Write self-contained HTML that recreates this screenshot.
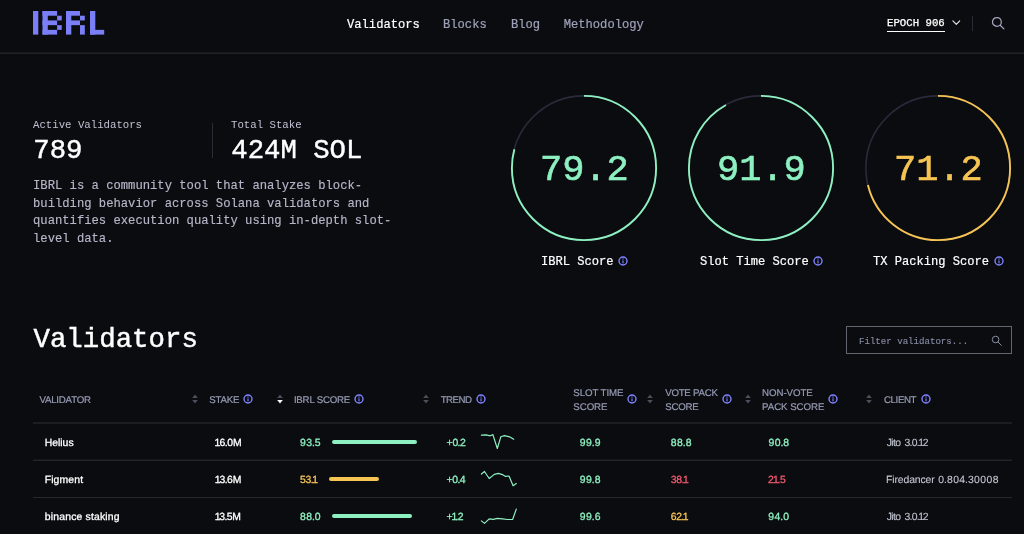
<!DOCTYPE html>
<html lang="en">
<head>
<meta charset="utf-8">
<title>IBRL</title>
<style>
*{box-sizing:border-box;margin:0;padding:0}
html,body{width:1024px;height:534px;overflow:hidden;background:#0b0c10;}
body{position:relative;will-change:transform;font-family:"Liberation Sans",sans-serif;color:#fff;}
.mono{font-family:"Liberation Mono",monospace;}
.abs{position:absolute;white-space:nowrap;}
.t{position:absolute;white-space:nowrap;line-height:1;}
.nav{font-family:"Liberation Mono",monospace;font-size:12.15px;color:#9da1b8;top:18.5px;-webkit-text-stroke:0.2px currentColor;}
.big{font-family:"Liberation Mono",monospace;color:#fff;-webkit-text-stroke:0.45px #fff;}
.lbl{font-family:"Liberation Mono",monospace;font-size:10.7px;color:#bfc2d2;}
.score{font-family:"Liberation Mono",monospace;font-size:37px;-webkit-text-stroke:0.6px currentColor;}
.slbl{font-family:"Liberation Mono",monospace;font-size:12.1px;color:#fff;-webkit-text-stroke:0.2px #fff;}
.green{color:#8df0c0;}
.yellow{color:#f6c453;}
.red{color:#ef5a6f;}
.th{position:absolute;font-size:9.7px;text-rendering:geometricPrecision;color:#979bb3;-webkit-text-stroke:0.2px currentColor;line-height:14.6px;white-space:nowrap;}
.td{position:absolute;font-size:10.4px;text-rendering:geometricPrecision;line-height:1;white-space:nowrap;-webkit-text-stroke:0.3px currentColor;}
.cl{-webkit-text-stroke:0.1px currentColor;}
i{font-style:normal;}
.p{margin:0 -0.45px;}
.o{margin:0 -0.9px 0 -0.8px;}
.rowline{position:absolute;left:33px;width:978.5px;height:1px;background:#24252e;}
.bar{position:absolute;height:3.5px;border-radius:2px;}
svg{position:absolute;overflow:visible;}
</style>
</head>
<body>
<svg style="left:33px;top:11.2px" width="72" height="23.6" viewBox="0 0 72 24" preserveAspectRatio="none">
<g fill="#7b7ff7">
<rect x="0" y="0" width="5.3" height="24"/>
<rect x="9.5" y="0" width="5.3" height="24"/>
<rect x="9.5" y="0" width="14.6" height="4.8"/>
<rect x="9.5" y="9.6" width="14.6" height="4.8"/>
<rect x="9.5" y="19.2" width="14.6" height="4.8"/>
<rect x="24.1" y="4.8" width="4.6" height="4.8"/>
<rect x="24.1" y="14.4" width="4.6" height="4.8"/>
<rect x="33" y="0" width="5.3" height="24"/>
<rect x="33" y="0" width="14" height="4.8"/>
<rect x="33" y="9.6" width="14" height="4.8"/>
<rect x="47" y="4.8" width="4.8" height="4.8"/>
<rect x="47" y="14.4" width="4.8" height="9.6"/>
<rect x="57" y="0" width="5.3" height="24"/>
<rect x="57" y="19.2" width="14.2" height="4.8"/>
</g></svg>
<div class="t nav" style="left:347px;color:#fff;">Validators</div>
<div class="t nav" style="left:443px;">Blocks</div>
<div class="t nav" style="left:511px;">Blog</div>
<div class="t nav" style="left:563.7px;">Methodology</div>
<div class="t mono" style="left:887px;top:17.8px;font-size:10.7px;color:#fff;-webkit-text-stroke:0.25px #fff;">EPOCH 906</div>
<div class="abs" style="left:887px;top:31px;width:58px;height:1px;background:#fff;"></div>
<svg style="left:951.5px;top:20.3px" width="9" height="6" viewBox="0 0 9 6"><path d="M0.9 0.9 L4.3 4.4 L7.7 0.9" fill="none" stroke="#e4e5ec" stroke-width="1.15" stroke-linecap="round" stroke-linejoin="round"/></svg>
<div class="abs" style="left:972px;top:16px;width:1px;height:15px;background:#2a2b36;"></div>
<svg style="left:990.5px;top:16.3px" width="14" height="14" viewBox="0 0 14 14"><circle cx="5.9" cy="5.9" r="4.4" fill="none" stroke="#a3a7bf" stroke-width="1.25"/><path d="M9.2 9.2 L12.9 12.9" stroke="#a3a7bf" stroke-width="1.25" stroke-linecap="round"/></svg>
<div class="abs" style="left:0;top:52px;width:1024px;height:1px;background:#17181d;"></div><div class="abs" style="left:0;top:53px;width:1024px;height:1px;background:#222329;"></div>
<div class="t lbl" style="left:33px;top:119.8px;">Active Validators</div>
<div class="t big" style="left:33.3px;top:137.2px;font-size:27.3px;">789</div>
<div class="abs" style="left:212px;top:123px;width:1px;height:35px;background:#2a2b36;"></div>
<div class="t lbl" style="left:231px;top:119.8px;">Total Stake</div>
<div class="t big" style="left:231.3px;top:137.2px;font-size:27.3px;">424M SOL</div>
<div class="abs mono" style="left:33px;top:177.8px;font-size:12.2px;line-height:17.7px;color:#b5b8c9;white-space:pre;-webkit-text-stroke:0.15px currentColor;">IBRL is a community tool that analyzes block-
building behavior across Solana validators and
quantifies execution quality using in-depth slot-
level data.</div>
<svg style="left:510px;top:93.7px" width="148" height="148" viewBox="0 0 148 148">
<circle cx="74" cy="74" r="72.1" fill="none" stroke="#292b3a" stroke-width="1.6"/>
<circle cx="74" cy="74" r="72.1" fill="none" stroke="#8df0c0" stroke-width="1.9" pathLength="100" stroke-dasharray="79.2 100" transform="rotate(-90 74 74)"/>
</svg>
<svg style="left:687px;top:93.7px" width="148" height="148" viewBox="0 0 148 148">
<circle cx="74" cy="74" r="72.1" fill="none" stroke="#292b3a" stroke-width="1.6"/>
<circle cx="74" cy="74" r="72.1" fill="none" stroke="#8df0c0" stroke-width="1.9" pathLength="100" stroke-dasharray="91.9 100" transform="rotate(-90 74 74)"/>
</svg>
<svg style="left:864px;top:93.7px" width="148" height="148" viewBox="0 0 148 148">
<circle cx="74" cy="74" r="72.1" fill="none" stroke="#292b3a" stroke-width="1.6"/>
<circle cx="74" cy="74" r="72.1" fill="none" stroke="#f6c453" stroke-width="1.9" pathLength="100" stroke-dasharray="71.2 100" transform="rotate(-90 74 74)"/>
</svg>
<div class="t score green" style="left:540px;top:152px;">79.2</div>
<div class="t score green" style="left:717px;top:152px;">91.9</div>
<div class="t score yellow" style="left:894px;top:152px;">71.2</div>
<div class="t slbl" style="left:541px;top:255.8px;">IBRL Score</div>
<div class="t slbl" style="left:700px;top:255.8px;">Slot Time Score</div>
<div class="t slbl" style="left:873px;top:255.8px;">TX Packing Score</div>
<svg style="left:616.7px;top:254.5px" width="12" height="12" viewBox="-6 -6 12 12"><circle r="4.0" fill="none" stroke="#7f83ff" stroke-width="1.4"/><circle cx="0" cy="-1.9" r="0.75" fill="#6d71e6"/><rect x="-0.65" y="-0.8" width="1.3" height="3.3" rx="0.5" fill="#6d71e6"/></svg><svg style="left:812px;top:254.5px" width="12" height="12" viewBox="-6 -6 12 12"><circle r="4.0" fill="none" stroke="#7f83ff" stroke-width="1.4"/><circle cx="0" cy="-1.9" r="0.75" fill="#6d71e6"/><rect x="-0.65" y="-0.8" width="1.3" height="3.3" rx="0.5" fill="#6d71e6"/></svg><svg style="left:992.5px;top:254.5px" width="12" height="12" viewBox="-6 -6 12 12"><circle r="4.0" fill="none" stroke="#7f83ff" stroke-width="1.4"/><circle cx="0" cy="-1.9" r="0.75" fill="#6d71e6"/><rect x="-0.65" y="-0.8" width="1.3" height="3.3" rx="0.5" fill="#6d71e6"/></svg>
<div class="t big" style="left:33.5px;top:326px;font-size:27.4px;">Validators</div>
<div class="abs" style="left:846px;top:326px;width:166px;height:28px;border:1px solid #62646f;"></div>
<div class="t mono" style="left:859px;top:337.1px;font-size:9.1px;color:#858aa2;-webkit-text-stroke:0.15px currentColor;">Filter validators...</div>
<svg style="left:990px;top:333.5px" width="13" height="13" viewBox="0 0 13 13"><circle cx="5.6" cy="5.5" r="3.3" fill="none" stroke="#8a8ea5" stroke-width="1"/><path d="M8.1 8.1 L11.3 11.3" stroke="#8a8ea5" stroke-width="1" stroke-linecap="round"/></svg>
<div class="th" style="left:39.39px;top:394.1px;letter-spacing:-0.209px;">VALIDATOR</div>
<div class="th" style="left:209.18px;top:394.1px;letter-spacing:-0.218px;">STAKE</div>
<div class="th" style="left:293.88px;top:394.1px;letter-spacing:-0.207px;">IBRL SCORE</div>
<div class="th" style="left:440.63px;top:394.1px;letter-spacing:-0.519px;">TREND</div>
<div class="th" style="left:573.33px;top:386.6px;letter-spacing:-0.073px;">SLOT TIME</div><div class="th" style="left:573.33px;top:401px;letter-spacing:-0.073px;">SCORE</div>
<div class="th" style="left:665.17px;top:386.6px;letter-spacing:-0.235px;">VOTE PACK</div><div class="th" style="left:665.17px;top:401px;letter-spacing:-0.235px;">SCORE</div>
<div class="th" style="left:762.06px;top:386.6px;letter-spacing:-0.049px;">NON-VOTE</div><div class="th" style="left:762.06px;top:401px;letter-spacing:-0.049px;">PACK SCORE</div>
<div class="th" style="left:883.99px;top:394.1px;letter-spacing:-0.379px;">CLIENT</div>
<svg style="left:242.4px;top:393px" width="12" height="12" viewBox="-6 -6 12 12"><circle r="4.0" fill="none" stroke="#7f83ff" stroke-width="1.4"/><circle cx="0" cy="-1.9" r="0.75" fill="#6d71e6"/><rect x="-0.65" y="-0.8" width="1.3" height="3.3" rx="0.5" fill="#6d71e6"/></svg><svg style="left:353.1px;top:393px" width="12" height="12" viewBox="-6 -6 12 12"><circle r="4.0" fill="none" stroke="#7f83ff" stroke-width="1.4"/><circle cx="0" cy="-1.9" r="0.75" fill="#6d71e6"/><rect x="-0.65" y="-0.8" width="1.3" height="3.3" rx="0.5" fill="#6d71e6"/></svg><svg style="left:475px;top:393px" width="12" height="12" viewBox="-6 -6 12 12"><circle r="4.0" fill="none" stroke="#7f83ff" stroke-width="1.4"/><circle cx="0" cy="-1.9" r="0.75" fill="#6d71e6"/><rect x="-0.65" y="-0.8" width="1.3" height="3.3" rx="0.5" fill="#6d71e6"/></svg><svg style="left:626.3px;top:393px" width="12" height="12" viewBox="-6 -6 12 12"><circle r="4.0" fill="none" stroke="#7f83ff" stroke-width="1.4"/><circle cx="0" cy="-1.9" r="0.75" fill="#6d71e6"/><rect x="-0.65" y="-0.8" width="1.3" height="3.3" rx="0.5" fill="#6d71e6"/></svg><svg style="left:721px;top:393px" width="12" height="12" viewBox="-6 -6 12 12"><circle r="4.0" fill="none" stroke="#7f83ff" stroke-width="1.4"/><circle cx="0" cy="-1.9" r="0.75" fill="#6d71e6"/><rect x="-0.65" y="-0.8" width="1.3" height="3.3" rx="0.5" fill="#6d71e6"/></svg><svg style="left:826.6px;top:393px" width="12" height="12" viewBox="-6 -6 12 12"><circle r="4.0" fill="none" stroke="#7f83ff" stroke-width="1.4"/><circle cx="0" cy="-1.9" r="0.75" fill="#6d71e6"/><rect x="-0.65" y="-0.8" width="1.3" height="3.3" rx="0.5" fill="#6d71e6"/></svg><svg style="left:920px;top:393px" width="12" height="12" viewBox="-6 -6 12 12"><circle r="4.0" fill="none" stroke="#7f83ff" stroke-width="1.4"/><circle cx="0" cy="-1.9" r="0.75" fill="#6d71e6"/><rect x="-0.65" y="-0.8" width="1.3" height="3.3" rx="0.5" fill="#6d71e6"/></svg><svg style="left:190.8px;top:393px" width="8" height="12" viewBox="-4 -6 8 12"><path d="M0 -4.5 L2.8 -1.1 L-2.8 -1.1 Z" fill="#4b4e5e"/><path d="M0 4.5 L2.8 1.1 L-2.8 1.1 Z" fill="#4b4e5e"/></svg><svg style="left:275.9px;top:393px" width="8" height="12" viewBox="-4 -6 8 12"><path d="M0 -4.5 L2.8 -1.1 L-2.8 -1.1 Z" fill="#4b4e5e"/><path d="M0 4.5 L2.8 1.1 L-2.8 1.1 Z" fill="#ffffff"/></svg><svg style="left:421.6px;top:393px" width="8" height="12" viewBox="-4 -6 8 12"><path d="M0 -4.5 L2.8 -1.1 L-2.8 -1.1 Z" fill="#4b4e5e"/><path d="M0 4.5 L2.8 1.1 L-2.8 1.1 Z" fill="#4b4e5e"/></svg><svg style="left:646.4px;top:393px" width="8" height="12" viewBox="-4 -6 8 12"><path d="M0 -4.5 L2.8 -1.1 L-2.8 -1.1 Z" fill="#4b4e5e"/><path d="M0 4.5 L2.8 1.1 L-2.8 1.1 Z" fill="#4b4e5e"/></svg><svg style="left:743.6px;top:393px" width="8" height="12" viewBox="-4 -6 8 12"><path d="M0 -4.5 L2.8 -1.1 L-2.8 -1.1 Z" fill="#4b4e5e"/><path d="M0 4.5 L2.8 1.1 L-2.8 1.1 Z" fill="#4b4e5e"/></svg><svg style="left:865.3px;top:393px" width="8" height="12" viewBox="-4 -6 8 12"><path d="M0 -4.5 L2.8 -1.1 L-2.8 -1.1 Z" fill="#4b4e5e"/><path d="M0 4.5 L2.8 1.1 L-2.8 1.1 Z" fill="#4b4e5e"/></svg>
<div class="rowline" style="top:422px;background:#1c1d23;"></div>
<div class="rowline" style="top:423px;background:#1c1d23;"></div>
<div class="rowline" style="top:459px;background:#15161b;"></div>
<div class="rowline" style="top:460px;background:#23242a;"></div>
<div class="rowline" style="top:497px;background:#26272d;"></div>
<div class="td" style="left:44.71px;top:438.79999999999995px;color:#fff;letter-spacing:0.001px;">Helius</div><div class="td" style="left:215.37px;top:438.79999999999995px;color:#fff;letter-spacing:-0.004px;"><i class="o">1</i>6<i class="p">.</i>0M</div><div class="td" style="left:300.12px;top:438.79999999999995px;color:#8df0c0;letter-spacing:0.374px;">93<i class="p">.</i>5</div><div class="td" style="left:446.5px;top:438.79999999999995px;color:#8df0c0;letter-spacing:-0.153px;">+0<i class="p">.</i>2</div><div class="td" style="left:579.7199999999999px;top:438.79999999999995px;color:#8df0c0;letter-spacing:0.5px;">99<i class="p">.</i>9</div><div class="td" style="left:670.8599999999999px;top:438.79999999999995px;color:#8df0c0;letter-spacing:0.425px;">88<i class="p">.</i>8</div><div class="td" style="left:768.4300000000001px;top:438.79999999999995px;color:#8df0c0;letter-spacing:0.431px;">90<i class="p">.</i>8</div><div class="td cl" style="left:886.73px;top:438.79999999999995px;color:#c4c6d3;letter-spacing:-0.609px;">Jito</div><div class="td cl" style="left:904.4px;top:438.79999999999995px;color:#c4c6d3;letter-spacing:-0.257px;">3<i class="p">.</i>0<i class="p">.</i><i class="o">1</i>2</div><div class="bar" style="left:332px;top:440.2px;width:84.69999999999999px;background:#8df0c0;"></div>
<div class="td" style="left:44.64px;top:475.79999999999995px;color:#fff;letter-spacing:0.156px;">Figment</div><div class="td" style="left:215.46px;top:475.79999999999995px;color:#fff;letter-spacing:-0.107px;"><i class="o">1</i>3<i class="p">.</i>6M</div><div class="td" style="left:299.89px;top:475.79999999999995px;color:#f6c453;letter-spacing:-0.137px;">53<i class="p">.</i><i class="o">1</i></div><div class="td" style="left:446.51px;top:475.79999999999995px;color:#8df0c0;letter-spacing:-0.197px;">+0<i class="p">.</i>4</div><div class="td" style="left:579.7199999999999px;top:475.79999999999995px;color:#8df0c0;letter-spacing:0.474px;">99<i class="p">.</i>8</div><div class="td" style="left:670.78px;top:475.79999999999995px;color:#ef5a6f;letter-spacing:-0.17px;">38<i class="p">.</i><i class="o">1</i></div><div class="td" style="left:768.0400000000001px;top:475.79999999999995px;color:#ef5a6f;letter-spacing:-0.018px;">2<i class="o">1</i><i class="p">.</i>5</div><div class="td cl" style="left:886.08px;top:475.79999999999995px;color:#c4c6d3;letter-spacing:-0.11px;">Firedancer</div><div class="td cl" style="left:938.37px;top:475.79999999999995px;color:#c4c6d3;letter-spacing:0.402px;">0<i class="p">.</i>804<i class="p">.</i>30008</div><div class="bar" style="left:328.6px;top:477.2px;width:50.599999999999966px;background:#f6c453;"></div>
<div class="td" style="left:44.809999999999995px;top:512.8px;color:#fff;letter-spacing:0.181px;">binance staking</div><div class="td" style="left:215.45000000000002px;top:512.8px;color:#fff;letter-spacing:-0.236px;"><i class="o">1</i>3<i class="p">.</i>5M</div><div class="td" style="left:300.1px;top:512.8px;color:#8df0c0;letter-spacing:0.346px;">88<i class="p">.</i>0</div><div class="td" style="left:446.47px;top:512.8px;color:#8df0c0;letter-spacing:-0.327px;">+<i class="o">1</i><i class="p">.</i>2</div><div class="td" style="left:579.7199999999999px;top:512.8px;color:#8df0c0;letter-spacing:0.491px;">99<i class="p">.</i>6</div><div class="td" style="left:670.66px;top:512.8px;color:#f6c453;letter-spacing:-0.214px;">62<i class="p">.</i><i class="o">1</i></div><div class="td" style="left:768.1400000000001px;top:512.8px;color:#8df0c0;letter-spacing:0.505px;">94<i class="p">.</i>0</div><div class="td cl" style="left:886.73px;top:512.8px;color:#c4c6d3;letter-spacing:-0.609px;">Jito</div><div class="td cl" style="left:904.4px;top:512.8px;color:#c4c6d3;letter-spacing:-0.257px;">3<i class="p">.</i>0<i class="p">.</i><i class="o">1</i>2</div><div class="bar" style="left:332.2px;top:514.1999999999999px;width:79.40000000000003px;background:#8df0c0;"></div>
<svg style="left:0;top:0" width="1024" height="534" viewBox="0 0 1024 534"><path d="M481.4 435.2 L486.1 434.8 L490.2 435.8 L492.9 434.6 L497.3 448.5 L500.8 436.8 L504.5 435.6 L509.6 436.8 L513.7 439.3" fill="none" stroke="#8df0c0" stroke-width="1.2" stroke-linejoin="round" stroke-linecap="round"/><path d="M481.4 474 L484.5 471.5 L489.2 478.5 L494.3 474.4 L498.4 473.4 L502.4 474.6 L505.5 476.4 L509 476 L513.1 485.8 L516.3 483.6" fill="none" stroke="#8df0c0" stroke-width="1.2" stroke-linejoin="round" stroke-linecap="round"/><path d="M481.4 520.9 L484.5 523.4 L489.2 518.9 L493.3 519.3 L497.3 518.3 L502.4 518.9 L507.6 519.5 L512.7 519.3 L516.3 509.1" fill="none" stroke="#8df0c0" stroke-width="1.2" stroke-linejoin="round" stroke-linecap="round"/></svg>
</body>
</html>
